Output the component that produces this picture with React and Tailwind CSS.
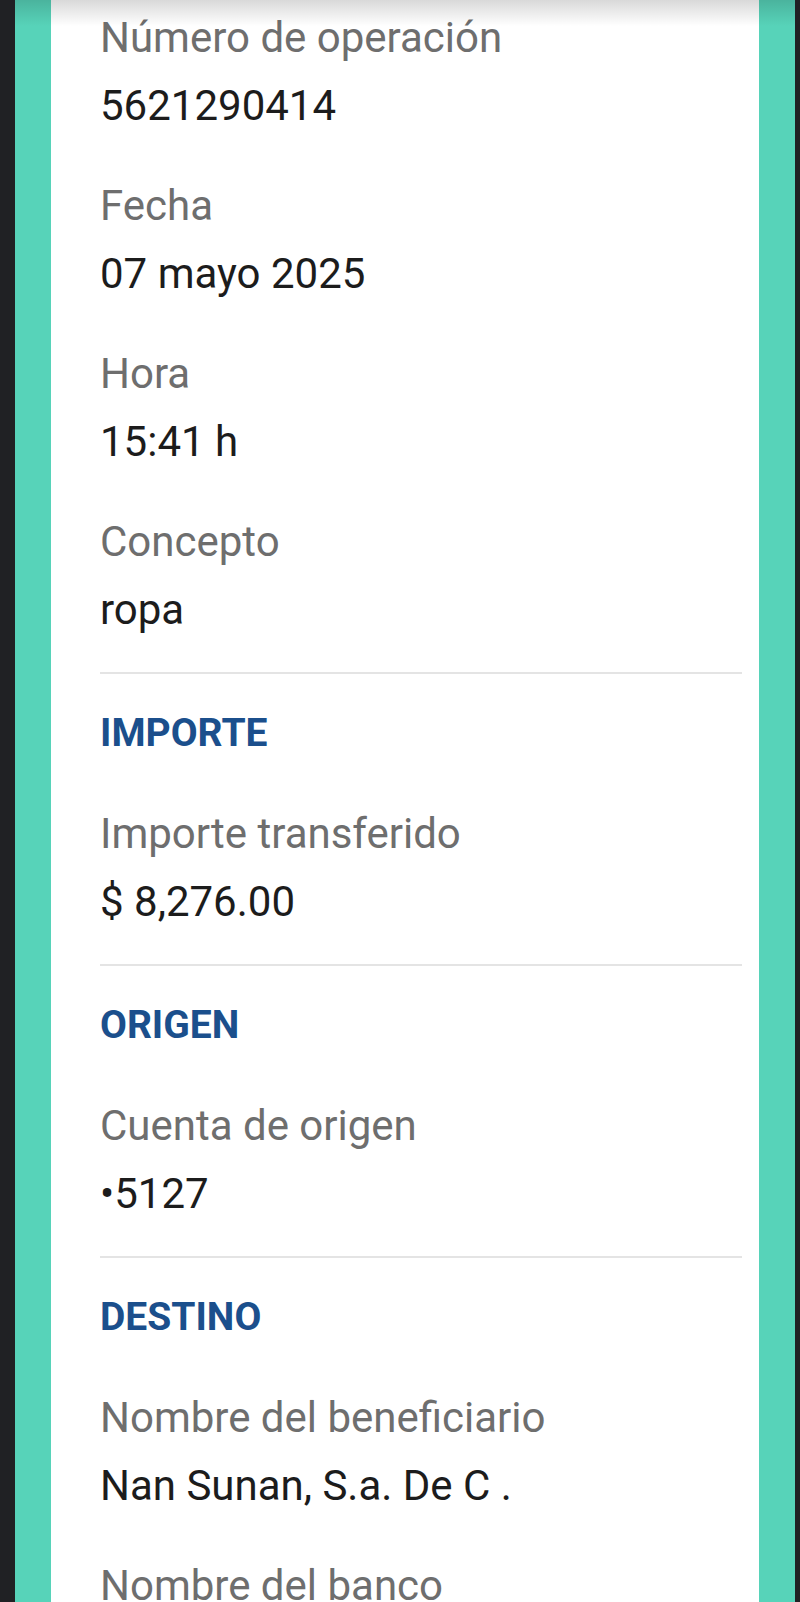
const SECTIONS = [
  {
    title: null,
    fields: [
      { label: "Número de operación", value: "5621290414" },
      { label: "Fecha", value: "07 mayo 2025" },
      { label: "Hora", value: "15:41 h" },
      { label: "Concepto", value: "ropa" },
    ],
  },
  {
    title: "IMPORTE",
    fields: [{ label: "Importe transferido", value: "$ 8,276.00" }],
  },
  {
    title: "ORIGEN",
    fields: [{ label: "Cuenta de origen", value: "•5127" }],
  },
  {
    title: "DESTINO",
    fields: [
      { label: "Nombre del beneficiario", value: "Nan Sunan, S.a. De C ." },
      { label: "Nombre del banco", value: "" },
    ],
  },
];

function Field({ label, value }) {
  return (
    <div className="flex flex-col">
      <div className="text-[42px] leading-[48px] text-[#6e6e6e]">{label}</div>
      {value && (
        <div className="mt-[20px] text-[42px] leading-[48px] text-[#1c1c1c]">
          {value}
        </div>
      )}
    </div>
  );
}

export default function App() {
  return (
    <div
      className="relative flex h-[1602px] w-[800px] overflow-hidden bg-[#202124]"
      style={{ fontFamily: "Roboto, 'Liberation Sans', sans-serif" }}
    >
      <div className="w-[15px] shrink-0" />
      <div className="w-[36px] shrink-0 bg-[#57d3b9]" />
      <div className="flex-1 bg-white pl-[49px] pr-[17px] pt-[14px]">
        {SECTIONS.map((s, i) => (
          <div key={i}>
            {i > 0 && <div className="mt-[38px] mb-[35px] h-[2px] bg-[#e4e4e4]" />}
            {s.title && (
              <div className="mb-[53px] text-[39px] font-bold leading-[48px] text-[#1b4f8c]">
                {s.title}
              </div>
            )}
            <div className="flex flex-col gap-[52px]">
              {s.fields.map((f) => (
                <Field key={f.label} {...f} />
              ))}
            </div>
          </div>
        ))}
      </div>
      <div className="w-[36px] shrink-0 bg-[#57d3b9]" />
      <div className="w-[5px] shrink-0" />
      <div className="pointer-events-none absolute left-[15px] right-[5px] top-0 h-[26px] bg-gradient-to-b from-black/15 to-transparent" />
    </div>
  );
}
